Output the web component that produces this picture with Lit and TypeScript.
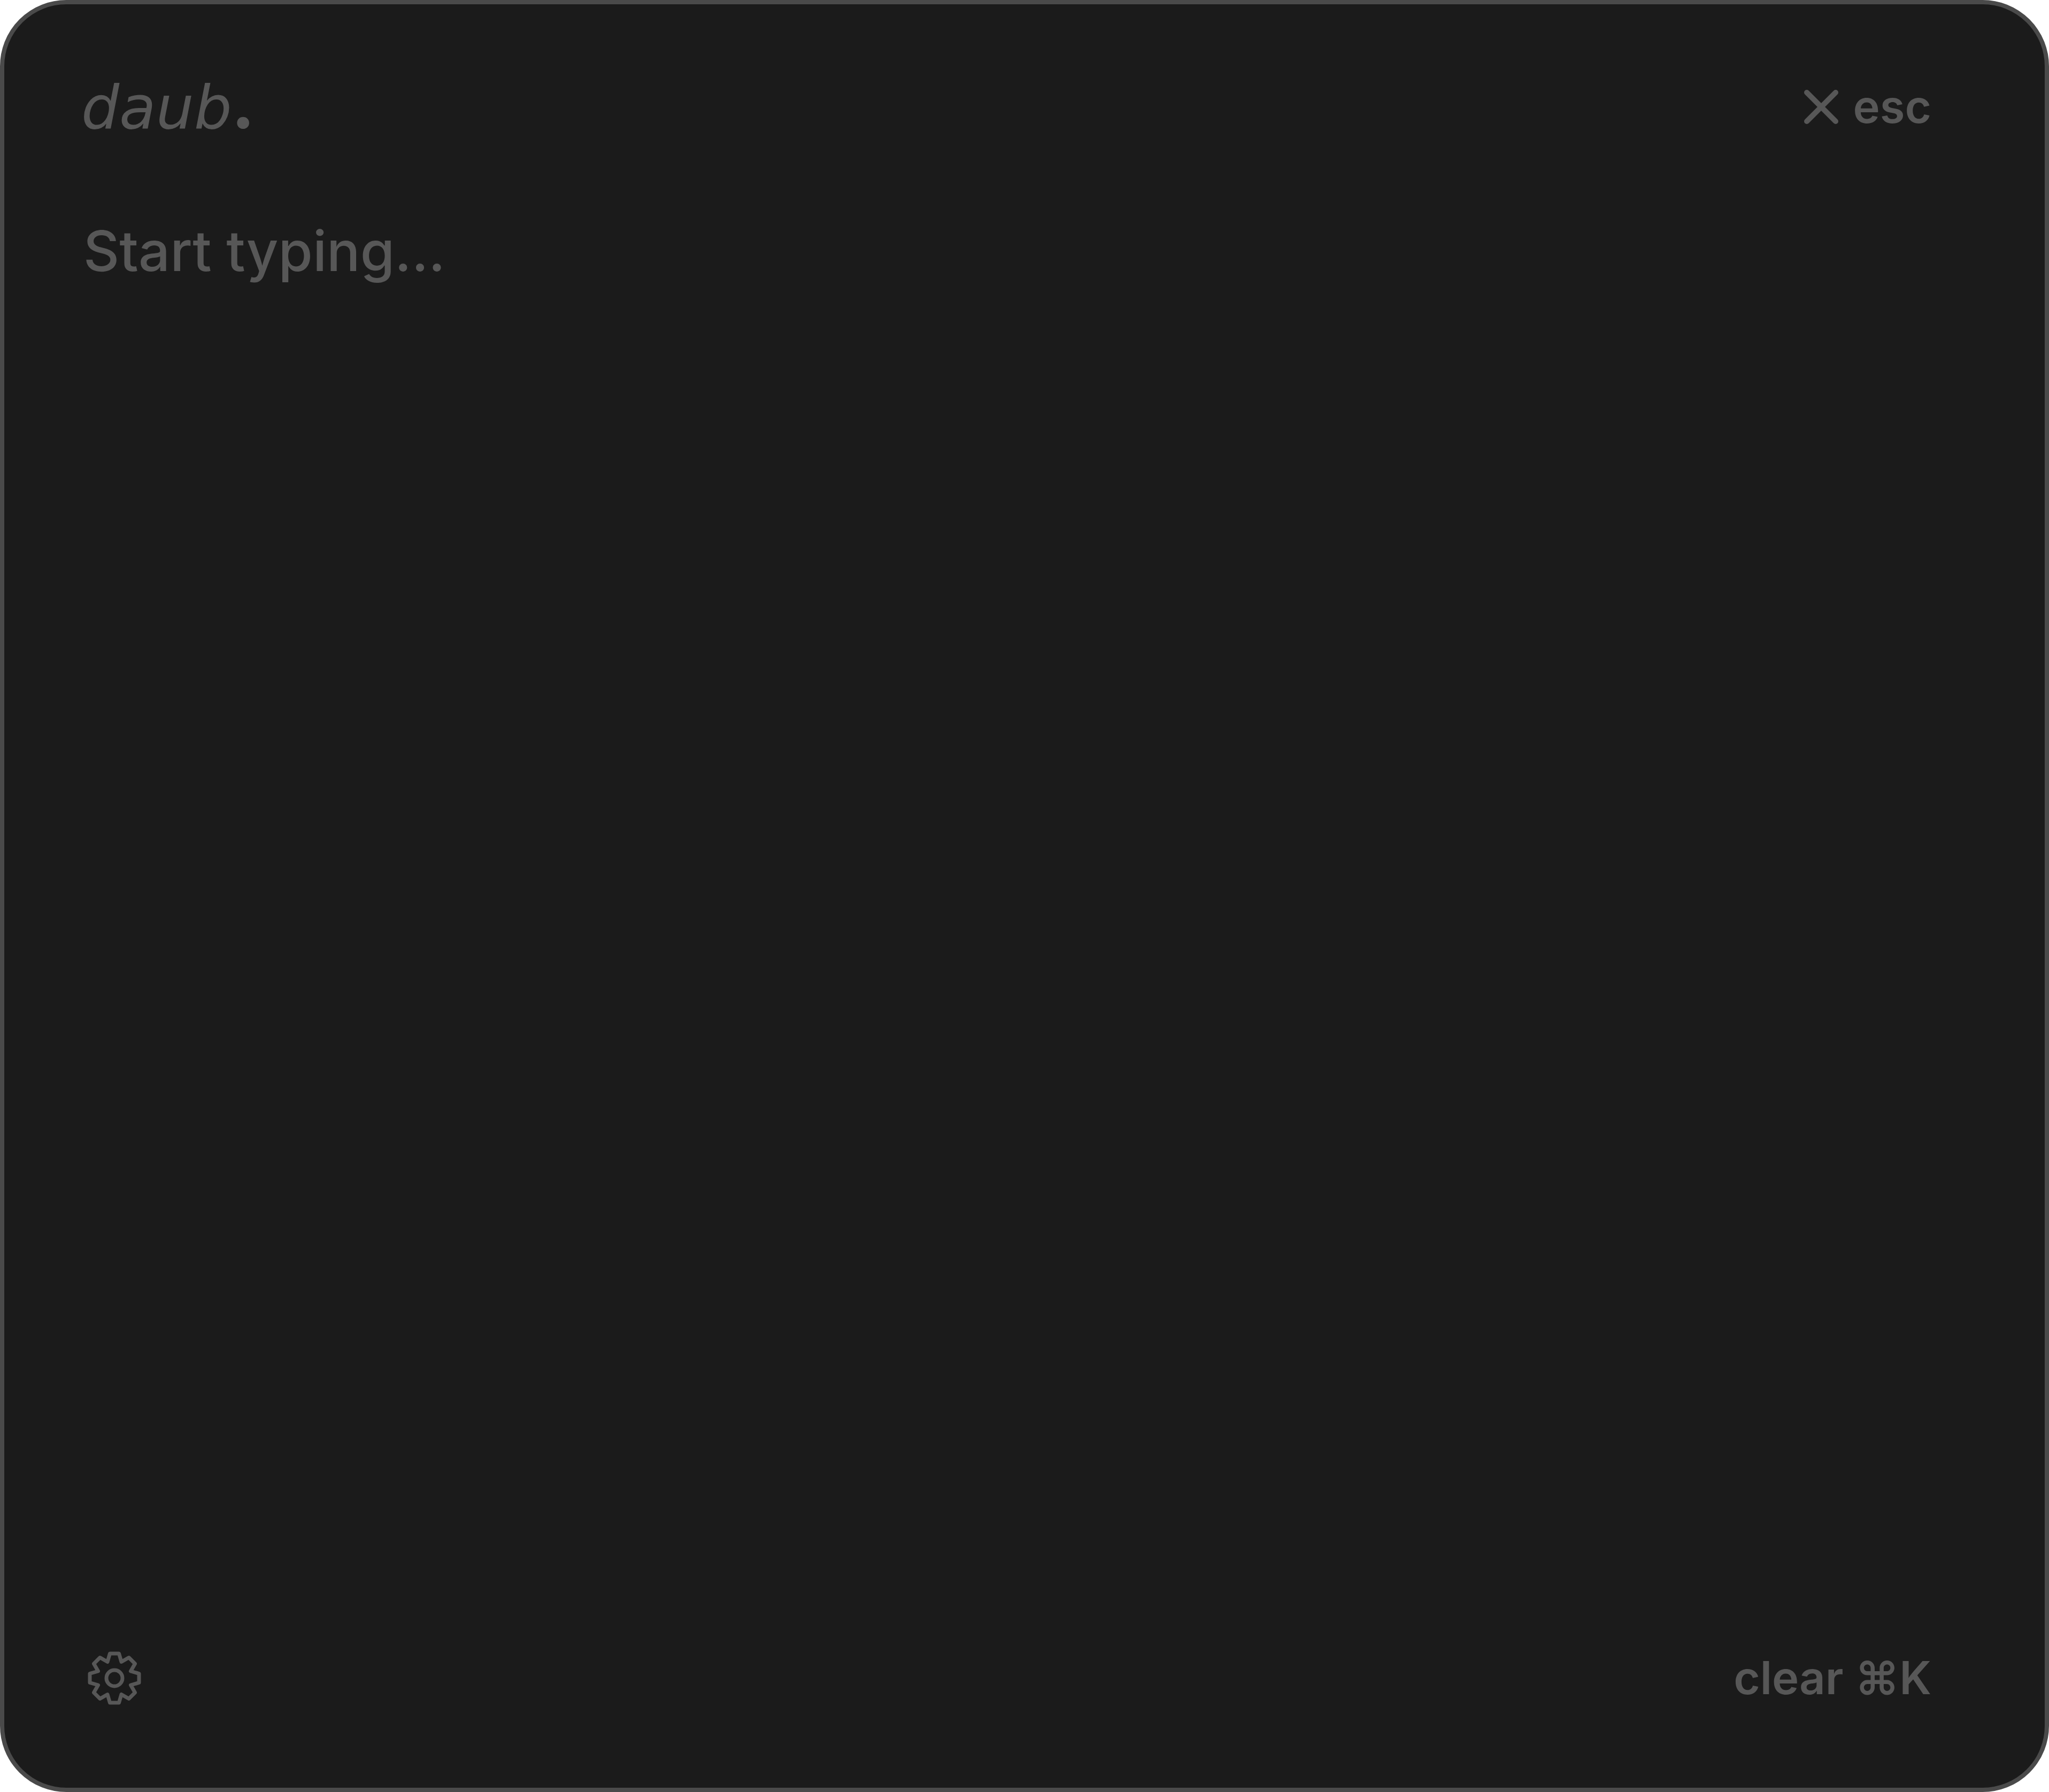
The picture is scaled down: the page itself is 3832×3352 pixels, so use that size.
import { LitElement, html, css } from "lit";
import { customElement, state } from "lit/decorators.js";

@customElement("app-root")
export class AppRoot extends LitElement {
  static styles = css`
    :host {
      display: block;
      --ink: #575757;
      --surface: #1b1b1b;
      --edge: #4a4a4a;
      font-family: Inter, "Liberation Sans", sans-serif;
      color: var(--ink);
    }
    .panel {
      box-sizing: border-box;
      min-height: 100vh;
      display: flex;
      flex-direction: column;
      padding: 120px 212px 133px 144px;
      border: 8px solid var(--edge);
      border-radius: 124px;
      background: var(--surface);
    }
    .bar {
      display: flex;
      align-items: center;
      justify-content: space-between;
      height: 144px;
    }
    .logo {
      display: flex;
      align-items: baseline;
      margin: 0;
      font: italic 400 112px/144px "DejaVu Sans", sans-serif;
    }
    .dot {
      font: normal 900 112px/144px Inter, sans-serif;
    }
    .action {
      display: flex;
      align-items: center;
      gap: 24px;
      margin: 0;
      padding: 0;
      border: 0;
      background: none;
      color: inherit;
      font: 600 85px/112px Inter, "Liberation Sans", sans-serif;
      cursor: pointer;
    }
    .close {
      display: block;
      width: 72px;
      height: 72px;
    }
    .gear {
      display: block;
      width: 104px;
      height: 104px;
      margin: 0 10px;
    }
    .editor {
      flex: 1;
      box-sizing: border-box;
      width: 100%;
      margin: 0;
      padding: 125px 4px 0;
      border: 0;
      outline: 0;
      resize: none;
      background: transparent;
      color: #d8d8d8;
      font: 500 104px/144px Inter, "Liberation Sans", sans-serif;
    }
    .editor::placeholder {
      color: var(--ink);
      opacity: 1;
    }
  `;

  @state() private text = "";

  private onInput(e: Event) {
    this.text = (e.target as HTMLTextAreaElement).value;
  }

  private clear() {
    this.text = "";
  }

  render() {
    return html`
      <main class="panel">
        <header class="bar">
          <h1 class="logo">daub<span class="dot">.</span></h1>
          <button class="action" type="button">
            <svg class="close" viewBox="0 0 72 72" fill="none" stroke="currentColor" stroke-width="10" stroke-linecap="round" aria-hidden="true">
              <path d="M9 9L63 63M63 9L9 63" />
            </svg>
            <span>esc</span>
          </button>
        </header>
        <textarea class="editor" aria-label="Note" placeholder="Start typing..." .value=${this.text} @input=${this.onInput}></textarea>
        <footer class="bar">
          <button class="action" type="button" aria-label="Settings">
            <svg class="gear" viewBox="0 0 104 104" fill="none" stroke="currentColor" stroke-width="7" stroke-linejoin="round" aria-hidden="true">
              <path d="M43.500 6H60.500L65 21.500L79 13.500L90.500 25L82.500 39L98 43.500V60.500L82.500 65L90.500 79L79 90.500L65 82.500L60.500 98H43.500L39 82.500L25 90.500L13.500 79L21.500 65L6 60.500V43.500L21.500 39L13.500 25L25 13.500L39 21.500Z" />
              <circle cx="52" cy="52" r="15" />
            </svg>
          </button>
          <button class="action" type="button" @click=${this.clear}>clear ⌘K</button>
        </footer>
      </main>
    `;
  }
}
